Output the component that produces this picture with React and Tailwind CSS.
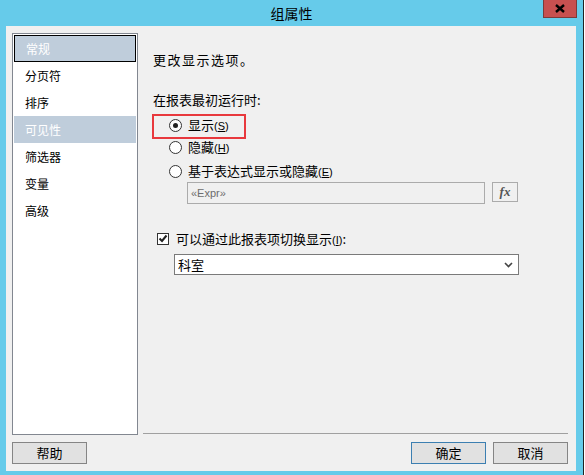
import React from 'react'

// --- Constants ---
const FONT = { fontFamily: '"Noto Sans CJK SC", "Liberation Sans", sans-serif' }
const NAV = ['常规', '分页符', '排序', '可见性', '筛选器', '变量', '高级']

// --- Mnemonic label like 显示(S) ---
const Label = ({ text, k }) => (
  <span className="leading-none">
    {text}
    <span className="text-[11px] font-['Liberation_Sans']">
      (<u>{k}</u>)
    </span>
  </span>
)

const Radio = ({ checked }) => (
  <span className="flex h-[13px] w-[13px] items-center justify-center rounded-full border border-[#333] bg-white">
    {checked && <span className="h-[5px] w-[5px] rounded-full bg-[#222]" />}
  </span>
)

const Button = ({ children, primary }) => (
  <button
    className={`flex h-[22px] w-[75px] items-center justify-center border bg-[#E1E1E1] text-[13px] text-black ${
      primary ? 'border-[#3C7FB1]' : 'border-[#858585]'
    }`}
  >
    {children}
  </button>
)

export default function App() {
  return (
    <div className="flex h-[475px] w-[585px] overflow-hidden bg-white text-black" style={FONT}>
      {/* Window */}
      <div className="flex h-full w-[583px] flex-col bg-[#66CBEA]">
        {/* Title bar */}
        <div className="relative flex h-[26px] shrink-0 items-center justify-center">
          <span className="text-[14px] leading-none">组属性</span>
          <div className="absolute right-[6px] top-0 flex h-[18px] w-[34px] items-center justify-center border border-[#7d3a3a] border-t-0 bg-[#C75050]">
            <svg width="10" height="9" viewBox="0 0 10 9">
              <path d="M1 1 L9 8 M9 1 L1 8" stroke="#000" strokeWidth="2.4" />
            </svg>
          </div>
        </div>

        {/* Client area */}
        <div className="ml-[6px] mr-[7px] flex h-[445px] flex-col bg-[#F0F0F0] px-[6px] pt-[7px]">
          <div className="flex h-[402px]">
            {/* Page list */}
            <div className="h-full w-[126px] border border-[#828790] bg-white p-[1px]">
              {NAV.map((item, i) => (
                <div
                  key={item}
                  className={`flex h-[27px] items-center pl-[11px] text-[12px] ${
                    i === 0
                      ? 'border border-black bg-[#BFCDDB] pl-[10px] text-white'
                      : i === 3
                        ? 'bg-[#BFCDDB] text-white'
                        : ''
                  }`}
                >
                  {item}
                </div>
              ))}
            </div>

            {/* Right panel */}
            <div className="ml-[5px] mr-[2px] flex flex-1 flex-col">
              <div className="flex-1 pl-[10px] text-[13px]">
                <div className="mt-[18px] flex h-[17px] items-center tracking-[1.5px]">更改显示选项。</div>
                <div className="mt-[23px] flex h-[17px] items-center">在报表最初运行时:</div>

                {/* Radio group */}
                <div className="relative mt-[6px]">
                  <div className="absolute left-[-1px] top-0 h-[25px] w-[94px] border-2 border-[#E8383D]" />
                  <div className="flex h-[22px] items-center gap-[6px] pl-[16px]">
                    <Radio checked />
                    <Label text="显示" k="S" />
                  </div>
                  <div className="flex h-[22px] items-center gap-[6px] pl-[16px]">
                    <Radio />
                    <Label text="隐藏" k="H" />
                  </div>
                  <div className="mt-[2px] flex h-[22px] items-center gap-[6px] pl-[16px]">
                    <Radio />
                    <Label text="基于表达式显示或隐藏" k="E" />
                  </div>
                  <div className="flex items-start gap-[7px] pl-[34px]">
                    <div className="flex h-[22px] w-[298px] items-center border border-[#ABABAB] bg-[#F0F0F0] pl-[3px] font-['Liberation_Sans'] text-[11px] text-[#6D6D6D]">
                      «Expr»
                    </div>
                    <div className="flex h-[20px] w-[26px] items-center justify-center border border-[#ABABAB] bg-[#F0F0F0] font-['Liberation_Serif'] text-[13px] font-bold italic text-[#555]">
                      fx
                    </div>
                  </div>
                </div>

                {/* Toggle checkbox */}
                <div className="mt-[26px] flex h-[17px] items-center gap-[7px] pl-[4px]">
                  <span className="flex h-[12px] w-[12px] items-center justify-center border border-[#333] bg-white">
                    <svg width="10" height="9" viewBox="0 0 10 9">
                      <path d="M1.5 4.5 L4 7 L8.5 1.5" fill="none" stroke="#222" strokeWidth="2" />
                    </svg>
                  </span>
                  <Label text="可以通过此报表项切换显示" k="I" />
                  <span className="-ml-[7px]">:</span>
                </div>
                <div className="ml-[21px] mt-[7px] flex h-[21px] w-[345px] items-center justify-between border border-[#7A7A7A] bg-white pl-[3px] pr-[5px]">
                  <span>科室</span>
                  <svg width="9" height="6" viewBox="0 0 9 6">
                    <path d="M1 1 L4.5 4.5 L8 1" fill="none" stroke="#444" strokeWidth="1.6" />
                  </svg>
                </div>
              </div>
              <div className="mb-[1px] h-px bg-[#A0A0A0]" />
            </div>
          </div>

          {/* Buttons */}
          <div className="mt-[7px] flex items-center">
            <Button>帮助</Button>
            <div className="flex-1" />
            <Button primary>确定</Button>
            <div className="w-[7px]" />
            <Button>取消</Button>
            <div className="w-[2px]" />
          </div>
        </div>
      </div>

      {/* Edge of window behind */}
      <div className="h-full w-[2px] border-l border-[#222] bg-white" />
    </div>
  )
}
